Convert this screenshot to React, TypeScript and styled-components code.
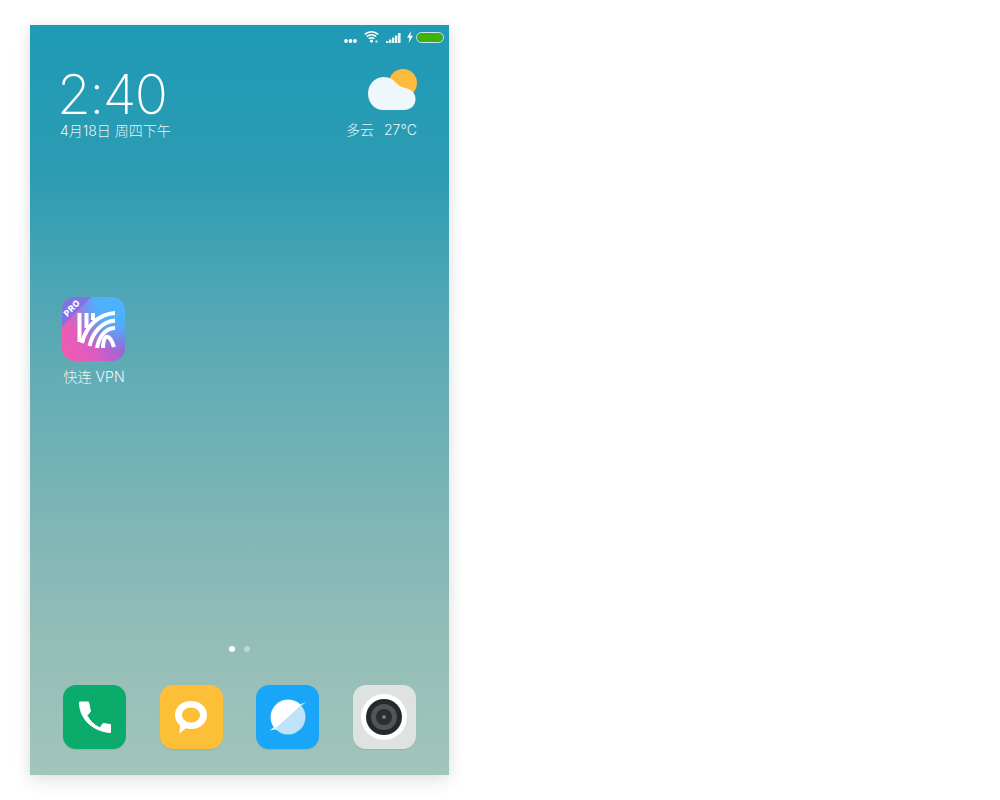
import React from "react";
import styled, { createGlobalStyle } from "styled-components";

const Global = createGlobalStyle`
  html, body { margin: 0; padding: 0; background: #fff; }
  body { font-family: "Inter", "Noto Sans CJK SC", sans-serif; }
`;

const Page = styled.div`
  width: 1000px;
  height: 800px;
  padding: 25px 0 0 30px;
  box-sizing: border-box;
  overflow: hidden;
`;

const Screen = styled.main`
  width: 419px;
  height: 750px;
  display: flex;
  flex-direction: column;
  color: #fff;
  background: linear-gradient(180deg, #1f9ab6 0%, #2c9cb3 20%, #4fa6b4 36%, #64adb5 48%, #7db5b6 65%, #93bdb7 82%, #a2c5bc 100%);
  box-shadow: 0 6px 18px rgba(0, 0, 0, 0.1), 0 0 12px rgba(0, 0, 0, 0.05);
`;

const StatusBar = styled.div`
  height: 24px;
  box-sizing: border-box;
  flex: none;
  display: flex;
  align-items: flex-end;
  justify-content: flex-end;
  padding: 0 5px 6px 0;
`;

const StatusIcon = styled.svg<{ $gap: number }>`
  display: block;
  margin-left: ${(p) => p.$gap}px;
  flex: none;
`;

const Header = styled.header`
  display: flex;
  justify-content: space-between;
  padding: 16px 32px 0 30px;
  flex: none;
`;

const ClockBlock = styled.div`
  display: flex;
  flex-direction: column;
`;

const Clock = styled.div`
  font-family: "Inter", sans-serif;
  font-weight: 200;
  font-size: 55px;
  line-height: 58px;
  margin-left: -3px;
  letter-spacing: -1.7px;
`;

const DateLine = styled.div`
  font-family: "Inter", "Noto Sans CJK SC", sans-serif;
  font-weight: 300;
  font-size: 14px;
  line-height: 16px;
  color: rgba(255, 255, 255, 0.92);
  white-space: nowrap;
`;

const WeatherBlock = styled.div`
  display: flex;
  flex-direction: column;
  align-items: flex-end;
  padding-top: 4px;
`;

const WeatherIcon = styled.svg`
  display: block;
`;

const WeatherText = styled.div`
  font-family: "Inter", "Noto Sans CJK SC", sans-serif;
  font-weight: 300;
  font-size: 14px;
  line-height: 18px;
  margin-top: 10px;
  word-spacing: -0.6px;
  color: rgba(255, 255, 255, 0.92);
  white-space: pre;
`;

const Desktop = styled.section`
  flex: 1;
  padding: 158px 0 0 18px;
`;

const AppTile = styled.div`
  width: 92px;
  display: flex;
  flex-direction: column;
  align-items: center;
`;

const AppIcon = styled.div`
  position: relative;
  width: 63px;
  height: 64px;
  margin-right: 1px;
  border-radius: 13px;
  overflow: hidden;
  background:
    radial-gradient(circle at 88% 8%, #4db2ff 0%, rgba(77, 178, 255, 0.95) 28%, rgba(77, 178, 255, 0) 62%),
    linear-gradient(68deg, #f45cae 0%, #d85cc2 42%, #8a68dc 82%, #7f70e0 100%);
`;

const AppGlyph = styled.svg`
  display: block;
`;

const ProRibbon = styled.div`
  position: absolute;
  left: -21px;
  top: -7px;
  width: 52px;
  height: 26px;
  box-sizing: border-box;
  padding-top: 15px;
  line-height: 10px;
  background: #7f72e2;
  transform: rotate(-45deg);
  text-align: center;
  font-family: "Inter", sans-serif;
  font-weight: 800;
  font-size: 8.5px;
  letter-spacing: 0.5px;
  color: #fff;
`;

const AppLabel = styled.div`
  margin-top: 7px;
  font-family: "Inter", "Noto Sans CJK SC", sans-serif;
  font-weight: 300;
  font-size: 14.2px;
  line-height: 18px;
  color: rgba(255, 255, 255, 0.92);
  white-space: nowrap;
`;

const Pager = styled.div`
  display: flex;
  justify-content: center;
  gap: 9px;
  flex: none;
  padding-right: 1px;
  margin-bottom: 33px;
`;

const PagerDot = styled.span<{ $active?: boolean }>`
  width: 6px;
  height: 6px;
  border-radius: 50%;
  background: ${(p) => (p.$active ? "#ffffff" : "rgba(255,255,255,0.4)")};
`;

const Dock = styled.nav`
  display: flex;
  justify-content: space-between;
  padding: 0 33px 26px;
  flex: none;
`;

const DockIcon = styled.div<{ $bg: string }>`
  width: 63px;
  height: 64px;
  border-radius: 13px;
  background: ${(p) => p.$bg};
  display: flex;
  align-items: center;
  justify-content: center;
  box-shadow: 0 1px 1px rgba(0, 0, 0, 0.08);
`;

const Lens = styled.div`
  width: 46px;
  height: 46px;
  border-radius: 50%;
  background: #fff;
  display: flex;
  align-items: center;
  justify-content: center;
`;

const App = () => (
  <>
    <Global />
    <Page>
      <Screen>
        <StatusBar>
          <StatusIcon $gap={0} width="13" height="4" viewBox="0 0 13 4">
            <circle cx="2" cy="2" r="1.9" fill="#fff" />
            <circle cx="6.500" cy="2" r="1.9" fill="#fff" />
            <circle cx="11" cy="2" r="1.9" fill="#fff" />
          </StatusIcon>
          <StatusIcon $gap={7} width="15" height="13" viewBox="0 0 15 13">
            <g fill="none" stroke="#fff" strokeWidth="1.5">
              <path d="M0.8 4.400 A9.500 9.500 0 0 1 14.200 4.400" />
              <path d="M2.800 6.600 A6.700 6.700 0 0 1 12.200 6.600" />
              <path d="M4.800 8.800 A3.800 3.800 0 0 1 10.200 8.800" />
            </g>
            <circle cx="7.500" cy="11" r="1.600" fill="#fff" />
            <circle cx="12.500" cy="11.500" r="1.200" fill="rgba(255,255,255,.7)" />
          </StatusIcon>
          <StatusIcon $gap={7} width="15" height="10" viewBox="0 0 15 10">
            <rect x="0" y="8" width="2.400" height="2" fill="rgba(255,255,255,.9)" />
            <rect x="3" y="6.500" width="2.400" height="3.500" fill="rgba(255,255,255,.9)" />
            <rect x="6" y="4.500" width="2.400" height="5.500" fill="rgba(255,255,255,.9)" />
            <rect x="9" y="2.500" width="2.400" height="7.500" fill="rgba(255,255,255,.9)" />
            <rect x="12" y="0" width="2.600" height="10" fill="rgba(255,255,255,.9)" />
          </StatusIcon>
          <StatusIcon $gap={6} width="6" height="12" viewBox="0 0 6 12">
            <path d="M4.200 0 L0 6.800 H2.600 L1.600 12 L6 4.800 H3.300 Z" fill="#fff" />
          </StatusIcon>
          <StatusIcon $gap={3} width="28" height="11" viewBox="0 0 28 11">
            <rect x="0.500" y="0.500" width="27" height="10" rx="5" fill="none" stroke="rgba(255,255,255,.75)" />
            <rect x="1.500" y="1.500" width="25" height="8" rx="4" fill="#40b30a" />
          </StatusIcon>
        </StatusBar>
        <Header>
          <ClockBlock>
            <Clock>2:40</Clock>
            <DateLine>4月18日 周四下午</DateLine>
          </ClockBlock>
          <WeatherBlock>
            <WeatherIcon width="50" height="42" viewBox="0 0 50 42">
              <circle cx="36" cy="14" r="14" fill="#fdbb3e" />
              <path
                d="M16.500 41 C7.400 41 1 33.600 1 24.500 C1 15.400 8 8 17 8 C24 8 27 12 32 16.500 C36 19.500 40 18.500 43.500 21 C47 23 48.500 26.500 48.500 30 C48.500 37 43 41 37 41 Z"
                fill="#eef7fa"
              />
            </WeatherIcon>
            <WeatherText>多云   27°C</WeatherText>
          </WeatherBlock>
        </Header>
        <Desktop>
          <AppTile>
            <AppIcon>
              <AppGlyph width="63" height="64" viewBox="0 0 63 64">
                <g fill="none" stroke="#fff" strokeWidth="4">
                  <path d="M17.500 16 V45" />
                  <path d="M24.500 16 V31" />
                  <path d="M31 16 V23" />
                  <path d="M53 16 C37 17 24 29 20 46" />
                  <path d="M53 23.500 C41 24.500 31 34 27.500 49" />
                  <path d="M53 31 C44 31 37 39 35 51" />
                  <path d="M52 50 C50 43 47 39 44 40 C41.500 42 41 46 41 51" />
                </g>
              </AppGlyph>
              <ProRibbon>PRO</ProRibbon>
            </AppIcon>
            <AppLabel>快连 VPN</AppLabel>
          </AppTile>
        </Desktop>
        <Pager>
          <PagerDot $active />
          <PagerDot />
        </Pager>
        <Dock>
          <DockIcon $bg="#0bab6c">
            <svg width="32" height="32" viewBox="0 0 32 32">
              <path
                fill="#fff"
                stroke="#fff"
                strokeWidth="1"
                strokeLinejoin="round"
                d="M0.500 1 L9.500 1 L11.500 10.500 L8 14.500 C11 20 15 24 21 27 L24 22.500 L31.500 23.500 L31.500 31.500 C22 31 14 27 8 21 C3 15 0.500 9 0.500 1 Z"
              />
            </svg>
          </DockIcon>
          <DockIcon $bg="#fdbf38">
            <svg width="34" height="36" viewBox="0 0 34 36">
              <path
                fill="#fff"
                fillRule="evenodd"
                d="M17 2 C26 2 33 8 33 16 C33 24 26 30 17 30 C15 30 13.500 29.700 12 29.300 L5.500 34.500 L6 26.500 C2.800 23.700 1 20 1 16 C1 8 8 2 17 2 Z M17 8.500 C12 8.500 8 12 8 16 C8 20 12 23.500 17 23.500 C22 23.500 26 20 26 16 C26 12 22 8.500 17 8.500 Z"
              />
            </svg>
          </DockIcon>
          <DockIcon $bg="#1aa6f8">
            <svg width="40" height="40" viewBox="0 0 40 40">
              <circle cx="20" cy="20" r="17.500" fill="#bfe2fb" />
              <path d="M7 31.700 A17.500 17.500 0 0 1 33 8.300 Z" fill="#fff" />
              <path d="M1.500 33.500 L7 29.500 L9.500 32 Z" fill="#e8f5fe" />
              <path d="M38.500 5 L33 9 L31 7.500 Z" fill="#bfe2fb" />
            </svg>
          </DockIcon>
          <DockIcon $bg="#dfe3e0">
            <Lens>
              <svg width="36" height="36" viewBox="0 0 36 36">
                <circle cx="18" cy="18" r="18" fill="#26282a" />
                <circle cx="18" cy="18" r="13" fill="#505557" />
                <circle cx="18" cy="18" r="8" fill="#2b2d2f" />
                <circle cx="18" cy="18" r="2" fill="#767b7d" />
              </svg>
            </Lens>
          </DockIcon>
        </Dock>
      </Screen>
    </Page>
  </>
);

export default App;
